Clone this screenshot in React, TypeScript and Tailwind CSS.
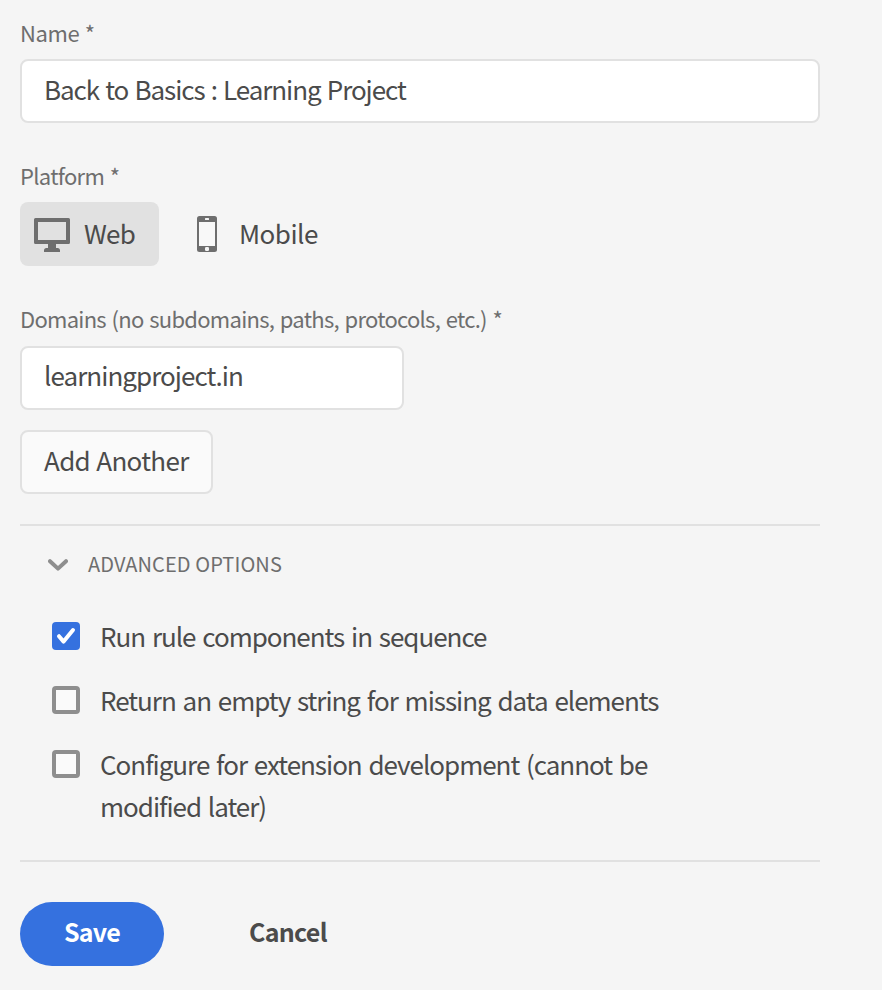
import { useState } from "react";

function MonitorIcon() {
  return (
    <svg className="mt-0.5" width="36" height="34" viewBox="0 0 36 34" fill="#6e6e6e" aria-hidden="true">
      <path
        fillRule="evenodd"
        d="M1.500 0h33A1.500 1.500 0 0 1 36 1.500v23a1.500 1.500 0 0 1-1.500 1.500H22v4h1.500a2.500 2.500 0 0 1 2.500 2.500V34H10v-1.500a2.500 2.500 0 0 1 2.500-2.500H14v-4H1.500A1.500 1.500 0 0 1 0 24.500v-23A1.500 1.500 0 0 1 1.500 0zM4 4v18h28V4z"
      />
    </svg>
  );
}

function PhoneIcon() {
  return (
    <svg width="20" height="36" viewBox="0 0 20 36" aria-hidden="true">
      <rect width="20" height="36" rx="2.500" fill="#6e6e6e" />
      <rect x="2" y="6" width="16" height="24" fill="#f8f8f8" />
      <rect x="8" y="2" width="4" height="2" rx="0.500" fill="#f5f5f5" />
      <rect x="8" y="31" width="4" height="4" rx="1.200" fill="#f5f5f5" />
    </svg>
  );
}

function ChevronIcon() {
  return (
    <svg width="20" height="12" viewBox="0 0 20 12" fill="none" aria-hidden="true">
      <path d="M2 2.200l8 7.400 8-7.400" stroke="#8e8e8e" strokeWidth="4" strokeLinecap="round" strokeLinejoin="round" />
    </svg>
  );
}

function Option({
  label,
  defaultChecked = false,
}: {
  label: React.ReactNode;
  defaultChecked?: boolean;
}) {
  const [checked, setChecked] = useState(defaultChecked);
  return (
    <button
      type="button"
      role="checkbox"
      aria-checked={checked}
      onClick={() => setChecked(!checked)}
      className="flex items-start gap-5 text-left"
    >
      {checked ? (
        <span className="mt-[7px] flex size-7 shrink-0 items-center justify-center rounded bg-[#3571df]">
          <svg width="28" height="28" viewBox="0 0 28 28" fill="none" aria-hidden="true">
            <path d="M7 14.200l4.600 5.400L21 8" stroke="#fff" strokeWidth="4" strokeLinecap="round" strokeLinejoin="round" />
          </svg>
        </span>
      ) : (
        <span className="mt-[7px] size-7 shrink-0 rounded border-4 border-[#8e8e8e] bg-[#fafafa]" />
      )}
      <span className="block text-[26px] leading-[42px] tracking-[-1.02px] whitespace-nowrap [word-spacing:2px]">
        {label}
      </span>
    </button>
  );
}

export default function App() {
  const [advancedOpen, setAdvancedOpen] = useState(true);
  return (
    <main className="min-h-[990px] bg-[#f5f5f5] pt-4 pl-5 font-['Noto_Sans_CJK_SC','Noto_Sans',sans-serif] text-[#4b4b4b]">
      <form className="flex w-[800px] flex-col items-start" onSubmit={(e) => e.preventDefault()}>
        <label className="h-[43px] text-[22px] leading-8 tracking-[-0.4px] text-[#6e6e6e] [word-spacing:1px]">
          Name *
        </label>
        <div className="flex h-16 w-full items-center rounded-lg border-2 border-[#e1e1e1] bg-white px-[22px] pb-1 text-[26px] leading-10 tracking-[-1.06px] [word-spacing:1.4px]">
          Back to Basics : Learning Project
        </div>

        <label className="mt-9 h-[43px] text-[22px] leading-8 tracking-[-0.7px] text-[#6e6e6e] [word-spacing:1.5px]">
          Platform *
        </label>
        <div className="flex h-16">
          <button type="button" className="flex h-16 w-[139px] items-center gap-3.5 rounded-lg bg-[#e1e1e1] pl-3.5">
            <MonitorIcon />
            <span className="mb-0.5 text-[26px] leading-10 tracking-[-0.8px]">Web</span>
          </button>
          <button type="button" className="ml-[38px] flex h-16 items-center gap-[22px]">
            <PhoneIcon />
            <span className="mb-0.5 text-[26px] leading-10 tracking-[-0.5px]">Mobile</span>
          </button>
        </div>

        <label className="mt-9 h-11 text-[22px] leading-8 tracking-[-0.73px] text-[#6e6e6e] [word-spacing:1.5px]">
          Domains (no subdomains, paths, protocols, etc.) *
        </label>
        <div className="flex h-16 w-96 items-center rounded-lg border-2 border-[#e1e1e1] bg-white px-[22px] pb-1.5 text-[26px] leading-10 tracking-[-0.95px]">
          learningproject.in
        </div>
        <button
          type="button"
          className="mt-5 flex h-16 w-[193px] items-center rounded-lg border-2 border-[#e1e1e1] bg-[#fafafa] px-[22px] pb-1 text-[26px] leading-10 tracking-[-0.66px] whitespace-nowrap [word-spacing:1px]"
        >
          Add Another
        </button>

        <section className="mt-[30px] flex h-[338px] w-full flex-col items-start border-y-2 border-[#e1e1e1] pl-7">
          <button
            type="button"
            aria-expanded={advancedOpen}
            onClick={() => setAdvancedOpen(!advancedOpen)}
            className="mt-[22px] flex h-8 items-center gap-5 text-[20px] leading-8 tracking-[0.1px] text-[#6e6e6e]"
          >
            <span className="pt-0.5"><ChevronIcon /></span>
            <span className="mb-px">ADVANCED OPTIONS</span>
          </button>
          {advancedOpen && (
            <div className="mt-[35px] flex flex-col items-start gap-[22px] pl-1">
              <Option label="Run rule components in sequence" defaultChecked />
              <Option label="Return an empty string for missing data elements" />
              <Option
                label={
                  <>
                    Configure for extension development (cannot be
                    <br />
                    modified later)
                  </>
                }
              />
            </div>
          )}
        </section>

        <div className="mt-10 flex h-16 items-center text-[25px] leading-10 font-bold">
          <button type="submit" className="flex h-16 w-36 items-center justify-center rounded-full bg-[#3571df] pb-[7px] tracking-[-0.8px] text-white">
            Save
          </button>
          <button type="button" className="ml-[85px] h-16 pb-[7px] tracking-[-0.7px]">
            Cancel
          </button>
        </div>
      </form>
    </main>
  );
}
